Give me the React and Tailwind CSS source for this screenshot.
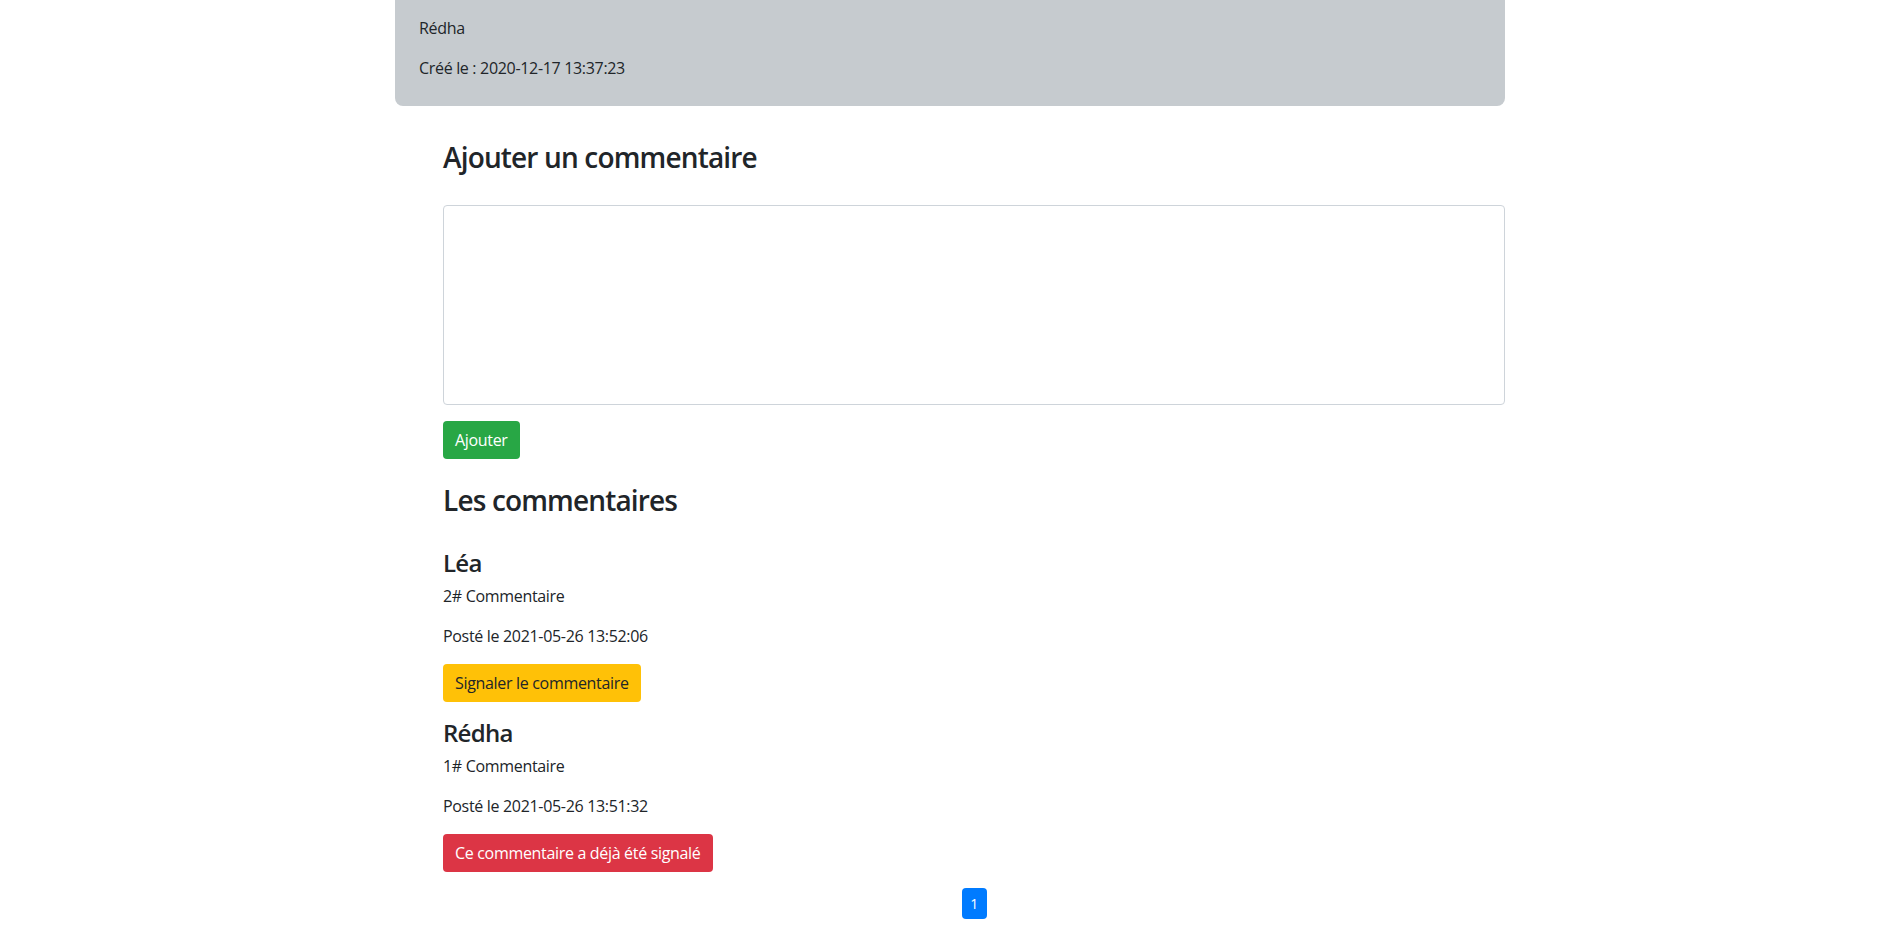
const comments = [
  { author: "Léa", content: "2# Commentaire", date: "2021-05-26 13:52:06", reported: false },
  { author: "Rédha", content: "1# Commentaire", date: "2021-05-26 13:51:32", reported: true },
];

const Comment = ({ comment, first }) => (
  <div>
    <h4 className={(first ? "mt-[31px]" : "mt-4") + " text-[24px] leading-[29px] font-[550] tracking-[-0.03em]"}>
      {comment.author}
    </h4>
    <p className="mt-[7px] leading-6">{comment.content}</p>
    <p className="mt-4 leading-6">Posté le {comment.date}</p>
    {comment.reported ? (
      <button className="mt-4 h-[38px] px-3 rounded bg-[#dc3545] text-white leading-6">
        Ce commentaire a déjà été signalé
      </button>
    ) : (
      <button className="mt-4 h-[38px] px-3 rounded bg-[#ffc107] text-[#212529] leading-6">
        Signaler le commentaire
      </button>
    )}
  </div>
);

export default function App() {
  return (
    <div className="min-h-screen bg-white text-[#212529] text-base tracking-[-0.02em] font-['Open_Sans','Noto_Sans',sans-serif]">
      <div className="w-[1110px] mx-auto">
        <section className="bg-[#c6cbcf] rounded-b-lg px-6 pt-4 pb-[26px]">
          <p className="leading-6">Rédha</p>
          <p className="mt-4 leading-6">Créé le : 2020-12-17 13:37:23</p>
        </section>

        <div className="ml-12 pb-4">
          <h3 className="mt-[34px] text-[28px] leading-[34px] font-[550] tracking-[-0.03em]">Ajouter un commentaire</h3>
          <textarea className="block mt-[31px] w-full h-[200px] border border-[#ced4da] rounded bg-white resize-none outline-none" />
          <button className="mt-4 h-[38px] px-3 rounded bg-[#28a745] text-white leading-6">Ajouter</button>

          <h3 className="mt-6 text-[28px] leading-[34px] font-[550] tracking-[-0.03em]">Les commentaires</h3>
          {comments.map((c, i) => (
            <Comment key={c.date} comment={c} first={i === 0} />
          ))}

          <div className="mt-4 flex justify-center">
            <span className="w-[25px] h-[31px] flex items-center justify-center rounded bg-[#007bff] text-white text-sm">
              1
            </span>
          </div>
        </div>
      </div>
    </div>
  );
}
